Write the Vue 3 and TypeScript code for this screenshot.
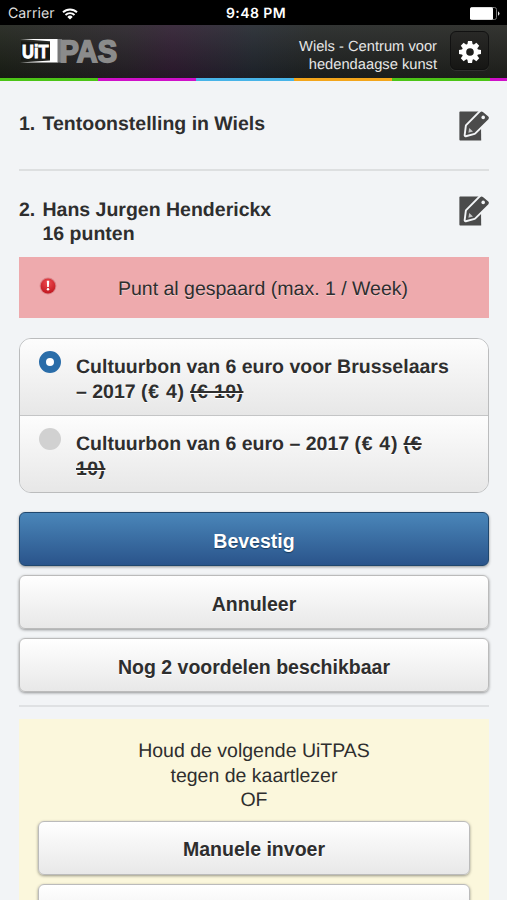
<script setup lang="ts">
import { ref } from 'vue'

interface Voucher {
  id: number
  name: string
  price: string
  oldPrice: string
}

const selected = ref(1)
const vouchers: Voucher[] = [
  { id: 1, name: 'Cultuurbon van 6 euro voor Brusselaars – 2017', price: '(€ 4)', oldPrice: '(€ 10)' },
  { id: 2, name: 'Cultuurbon van 6 euro – 2017', price: '(€ 4)', oldPrice: '(€ 10)' },
]
const steps = [
  { nr: '1.', lines: ['Tentoonstelling in Wiels'] },
  { nr: '2.', lines: ['Hans Jurgen Henderickx', '16 punten'] },
]
const teeth = [0, 45, 90, 135, 180, 225, 270, 315]
</script>

<template>
  <div class="screen">
    <div class="status">
      <div class="carrier">
        <span>Carrier</span>
        <svg width="16" height="12" viewBox="0 0 16 12" fill="none" stroke="#fff" stroke-width="1.9">
          <path d="M1 4.3a10 10 0 0 1 14 0M3.5 7a6.4 6.4 0 0 1 9 0" />
          <path d="M5.3 8.9a3.9 3.9 0 0 1 5.4 0L8 11.6z" fill="#fff" stroke="none" />
        </svg>
      </div>
      <span class="clock">9:48 PM</span>
      <svg class="battery" width="30" height="13" viewBox="0 0 30 13">
        <rect x=".5" y=".5" width="26" height="12" rx="2" fill="none" stroke="#777" />
        <rect x="0" y=".3" width="23" height="12.4" rx="1.5" fill="#fff" />
        <path d="M28 4.2q3 2.3 0 4.6z" fill="#ddd" />
      </svg>
    </div>

    <header class="topbar">
      <svg class="logo" width="99" height="26" viewBox="0 0 99 26">
        <path d="M0 1H38V24.6H0L30 22.5V3.2z" fill="#fff" />
        <path d="M1 3.2L30 5V20.6L1 22.4z" fill="#171916" />
        <path d="M37.5 1H42V24.6H37.5z" fill="#777" />
        <text x="2" y="19.8" class="uit" textLength="26.5" lengthAdjust="spacingAndGlyphs">UiT</text>
        <text x="39.5" y="23.6" class="pas" textLength="57.5" lengthAdjust="spacingAndGlyphs">PAS</text>
      </svg>
      <div class="venue">Wiels - Centrum voor<br />hedendaagse kunst</div>
      <button class="settings" aria-label="Instellingen">
        <svg width="24" height="24" viewBox="-12 -12 24 24">
          <path
            v-for="a in teeth"
            :key="a"
            d="M-2.7-7L-2-11H2L2.7-7z"
            fill="#fff"
            :transform="`rotate(${a})`"
          />
          <circle r="6" fill="none" stroke="#fff" stroke-width="4.4" />
        </svg>
      </button>
    </header>
    <div class="stripe"><i v-for="n in 6" :key="n"></i></div>

    <main>
      <section v-for="(s, i) in steps" :key="i" class="step" :class="{ first: i === 0 }">
        <span class="nr">{{ s.nr }}</span>
        <div class="label"><div v-for="l in s.lines" :key="l">{{ l }}</div></div>
        <svg class="edit" width="31" height="31" viewBox="0 0 31 31">
          <path d="M1.2.6H21.8L22.2 29.6H1.2Q.4 29.6 .4 28.6V1.6Q.4.6 1.2.6z" fill="#4b4b4b" />
          <path
            d="M21.2 1.2Q22.6 0 23.9 1.1L29.3 5.6Q30.6 6.8 29.4 8.2L15.4 22L6.6 24.3L7.8 14.8z"
            fill="#4b4b4b" stroke="#f3f5f7" stroke-width="3.8" stroke-linejoin="round" />
          <path
            d="M21.2 1.2Q22.6 0 23.9 1.1L29.3 5.6Q30.6 6.8 29.4 8.2L15.4 22L6.6 24.3L7.8 14.8z"
            fill="#4b4b4b" />
          <path d="M10.2 17L14 20.6L9.4 21.8z" fill="#c4c5c6" />
          <circle cx="24.2" cy="6.4" r="1.8" fill="#f3f5f7" />
        </svg>
      </section>

      <div class="alert">
        <svg width="18" height="18" viewBox="0 0 18 18">
          <defs>
            <radialGradient id="ball" cx=".5" cy=".3" r=".75">
              <stop offset="0" stop-color="#ef4a50" />
              <stop offset="1" stop-color="#bd141c" />
            </radialGradient>
          </defs>
          <circle cx="9" cy="9" r="8.4" fill="#d98489" />
          <circle cx="9" cy="9" r="7.4" fill="url(#ball)" />
          <path d="M7.8 3.8H10.2L9.8 10H8.2z" fill="#fff" />
          <circle cx="9" cy="12.2" r="1.2" fill="#fff" />
        </svg>
        <span>Punt al gespaard (max. 1 / Week)</span>
      </div>

      <div class="options">
        <div v-for="v in vouchers" :key="v.id" class="option" @click="selected = v.id">
          <span class="radio" :class="{ on: selected === v.id }"></span>
          <div class="text">{{ v.name }} <span class="price">{{ v.price }}</span> <s>{{ v.oldPrice }}</s></div>
        </div>
      </div>

      <div class="actions">
        <button class="btn primary">Bevestig</button>
        <button class="btn">Annuleer</button>
        <button class="btn">Nog 2 voordelen beschikbaar</button>
      </div>

      <div class="next">
        <p>Houd de volgende UiTPAS<br />tegen de kaartlezer<br />OF</p>
        <button class="btn">Manuele invoer</button>
        <button class="btn"></button>
      </div>
    </main>
  </div>
</template>

<style>
body {
  margin: 0;
  background: #f2f4f6;
}
</style>

<style scoped>
.screen {
  height: 900px;
  overflow: hidden;
  background: #f2f4f6;
  color: #2e2e2e;
  font: 19.5px/24.5px "Liberation Sans", sans-serif;
  text-rendering: geometricPrecision;
}
.status {
  height: 25px;
  box-sizing: border-box;
  padding: 2px 7px 0 8px;
  display: grid;
  grid-template-columns: 1fr auto 1fr;
  align-items: center;
  background: #000;
  color: #fff;
  font: 14px/20px Inter, sans-serif;
}
.carrier {
  display: flex;
  align-items: center;
  gap: 7px;
  color: #ddd;
  font-size: 14.2px;
}
.clock {
  padding-left: 4px;
  font-weight: 600;
  letter-spacing: 0.4px;
}
.battery {
  justify-self: end;
}
.topbar {
  height: 53px;
  box-sizing: border-box;
  padding: 0 18px 0 20px;
  display: flex;
  align-items: center;
  background:
    linear-gradient(180deg, rgba(255, 255, 255, 0.1), rgba(0, 0, 0, 0.02)),
    linear-gradient(90deg, #171b13 0, #211c22 25%, #28172a 34%, #1c2128 50%, #1b1e1d 62%, #1d1e1a 100%);
}
.logo {
  margin-bottom: 2px;
  overflow: visible;
}
.uit {
  font: bold 19px "Liberation Sans", sans-serif;
  fill: #fff;
  stroke: #fff;
  stroke-width: 1px;
}
.pas {
  font: bold 31px "Liberation Sans", sans-serif;
  fill: #8b8b8b;
  stroke: #8b8b8b;
  stroke-width: 1.8px;
}
.venue {
  margin-left: auto;
  padding-top: 9px;
  text-align: right;
  color: #e6e6e6;
  font-size: 14.7px;
  line-height: 18px;
}
.settings {
  width: 39px;
  height: 39px;
  margin: 0 0 2px 13px;
  padding: 2px 0 0;
  display: grid;
  place-items: center;
  border: 1px solid #111;
  border-radius: 6px;
  background: linear-gradient(#292927, #161614);
  box-shadow: 0 1px 0 #30302e;
}
.stripe {
  display: grid;
  grid-template-columns: repeat(6, 98px);
  height: 3px;
  width: 507px;
  overflow: hidden;
}
.stripe i:nth-child(4n + 1) { background: #4cc417; }
.stripe i:nth-child(4n + 2) { background: #cf10c9; }
.stripe i:nth-child(4n + 3) { background: #48b4e8; }
.stripe i:nth-child(4n + 4) { background: #f3a51b; }
main {
  padding: 0 18px 0 19px;
}
.step {
  display: flex;
  align-items: flex-start;
  box-sizing: border-box;
  height: 86px;
  padding-top: 25px;
  font-weight: bold;
}
.step.first {
  height: 90px;
  padding-top: 30px;
  border-bottom: 2px solid #dddfe0;
}
.nr {
  width: 23.5px;
  padding-top: 1.5px;
}
.label {
  flex: 1;
  padding-top: 1.5px;
}
.step.first .nr,
.step.first .label {
  padding-top: 1px;
}
.edit {
  flex: none;
  margin-right: -1px;
}
.alert {
  position: relative;
  display: flex;
  align-items: center;
  justify-content: center;
  box-sizing: border-box;
  height: 61px;
  padding: 3px 0 0 18px;
  background: #eeaaad;
  text-shadow: 0 1px 0 #f5cccd;
}
.alert svg {
  position: absolute;
  left: 20px;
  top: 20px;
}
.options {
  margin-top: 20px;
  border: 1px solid #bbbcbd;
  border-radius: 12px;
  overflow: hidden;
}
.option {
  display: flex;
  box-sizing: border-box;
  height: 76px;
  padding: 16px 38px 0 19px;
  font-weight: bold;
  text-shadow: 0 1px 0 #fff;
  background: linear-gradient(#fdfdfd, #e7e7e7);
}
.option + .option {
  height: 77px;
  border-top: 1px solid #c4c5c6;
}
.radio {
  flex: none;
  box-sizing: border-box;
  width: 22px;
  height: 22px;
  margin: -4px 15px 0 0;
  border-radius: 50%;
  background: #d1d1d1;
}
.radio.on {
  background: #fff;
  border: 7px solid #2a6da9;
}
.text {
  flex: 1;
}
.price {
  letter-spacing: 0.7px;
}
s {
  letter-spacing: 0.4px;
  text-decoration-thickness: 1.5px;
}
.actions {
  padding: 19px 0 13px;
  display: grid;
  gap: 9px;
  border-bottom: 2px solid #dfe1e3;
}
.btn {
  display: block;
  box-sizing: border-box;
  width: 100%;
  height: 54px;
  padding: 4px 0 0;
  border: 1px solid #bbb;
  border-radius: 6px;
  background: linear-gradient(#fff, #e8e8e8);
  box-shadow: 0 1px 3px rgba(0, 0, 0, 0.4);
  color: #2e2e2e;
  font: bold 19.5px/24.5px "Liberation Sans", sans-serif;
  text-shadow: 0 1px 0 #fff;
}
.btn.primary {
  border-color: #20476d;
  background: linear-gradient(#4a86b9, #2a548b);
  color: #fff;
  text-shadow: 0 1px 1px #183a5c;
}
.next {
  margin-top: 12px;
  padding: 20px 19px;
  background: #fbf7dc;
  text-align: center;
}
.next p {
  margin: 0 0 8px;
}
.next .btn + .btn {
  margin-top: 9px;
}
</style>
